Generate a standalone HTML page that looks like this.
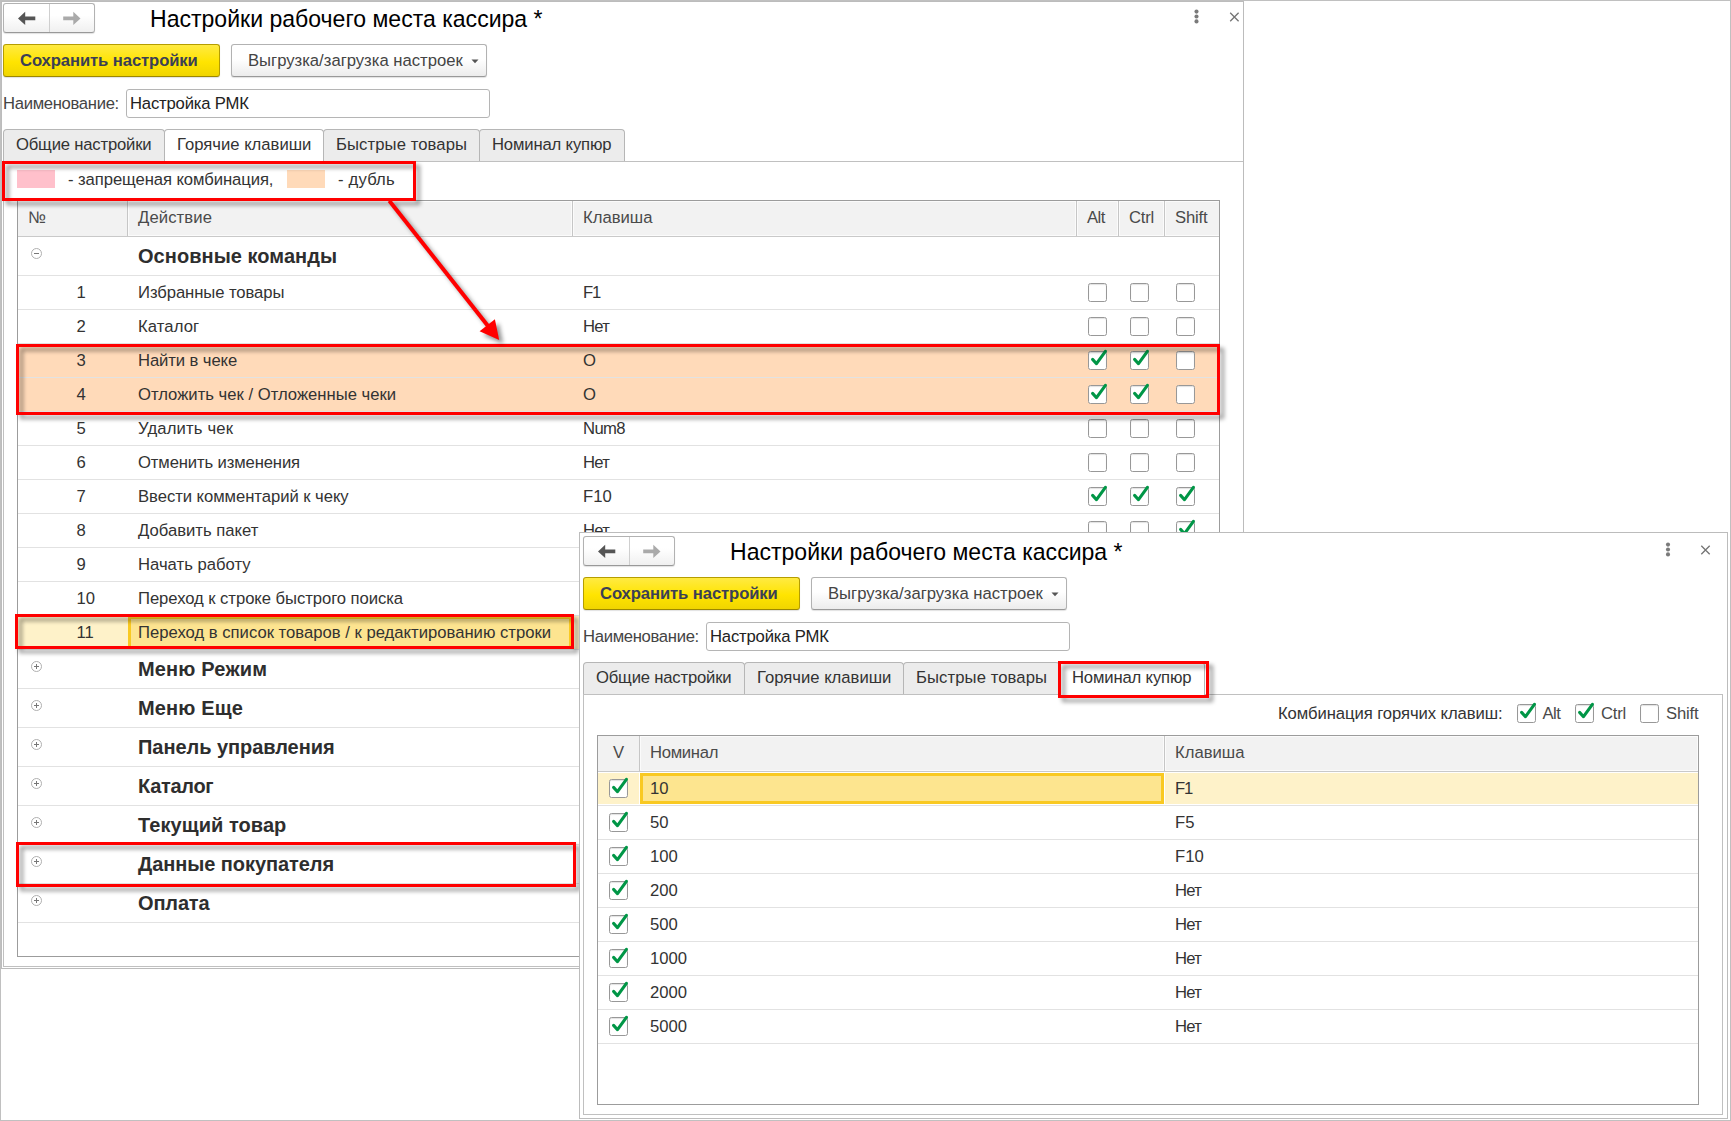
<!DOCTYPE html>
<html lang="ru"><head><meta charset="utf-8"><title>Настройки рабочего места кассира</title>
<style>
*{box-sizing:border-box;margin:0;padding:0}
html,body{width:1731px;height:1121px;overflow:hidden;background:#fff}
body{font-family:"Liberation Sans",sans-serif;font-size:16.67px;color:#333;position:relative}
.a{position:absolute}
.t{position:absolute;white-space:nowrap;line-height:20px;height:20px}
.win{position:absolute;background:#fff;overflow:hidden}
.title{position:absolute;font-size:23.06px;color:#000;white-space:nowrap;line-height:28px}
.nav{position:absolute;width:92px;height:30px;border:1px solid #b2b2b2;border-bottom-color:#999;border-radius:3px;background:linear-gradient(#fff,#fff 40%,#f0f0f0);box-shadow:0 1px 1px rgba(0,0,0,.12)}
.nav i{position:absolute;left:45px;top:0;width:1px;height:28px;background:#cfcfcf}
.ybtn{position:absolute;height:33px;border:1px solid #b59d00;border-bottom-color:#9c8700;border-radius:3px;background:linear-gradient(#ffea42,#ffe400 55%,#f0d500);box-shadow:0 1px 1px rgba(0,0,0,.12);font-weight:bold;color:#3b3f55;line-height:31px;white-space:nowrap;padding-left:16px}
.btn{position:absolute;height:33px;border:1px solid #b2b2b2;border-bottom-color:#999;border-radius:3px;background:linear-gradient(#fff,#fff 45%,#ececec);box-shadow:0 1px 1px rgba(0,0,0,.12);color:#444;line-height:31px;white-space:nowrap;padding-left:16px}
.inp{position:absolute;height:29px;border:1px solid #b5b5b5;border-radius:3px;background:#fff;line-height:27px;padding-left:3px;white-space:nowrap;color:#222}
.tab{position:absolute;height:32px;border:1px solid #b6b6b6;border-bottom:none;border-radius:4px 4px 0 0;background:#ececec;line-height:29px;padding-left:12px;white-space:nowrap;color:#333}
.tab.on{background:#fff;height:33px}
.panel{position:absolute;border:1px solid #c0c0c0;background:#fff}
.tbl{position:absolute;border:1px solid #9c9c9c;background:#fff;overflow:hidden}
.hd{position:absolute;left:0;top:0;right:0;height:36px;background:#f2f2f2;border-bottom:1px solid #c9c9c9}
.hc{position:absolute;top:0;height:35px;line-height:33px;color:#4a4a4a;white-space:nowrap;padding-left:10px;border-left:1px solid #c6c6c6;box-shadow:inset 1px 1px 0 #fbfbfb,inset -1px -1px 0 #fbfbfb}
.row{position:absolute;left:0;right:0;border-bottom:1px solid #e2e2e2}
.row .c{position:absolute;top:0;white-space:nowrap}
.r34{height:34px;line-height:33px}
.r39{height:39px;line-height:38px}
.g{font-weight:bold;font-size:20px;color:#2e2e2e}
.cb{position:absolute;width:19px;height:19px;border:1px solid #989898;border-radius:2.5px;background:#fff;box-shadow:inset 0 1px 1px rgba(0,0,0,.12)}
.cb svg{position:absolute;left:-1px;top:-3px;overflow:visible}
.tr{position:absolute;width:11px;height:11px;border:1px solid #b0b0b0;border-radius:50%;background:#fff}
.tr:before{content:"";position:absolute;left:2px;top:4px;width:5px;height:1px;background:#777}
.tr.p:after{content:"";position:absolute;left:4px;top:2px;width:1px;height:5px;background:#777}
.red{position:absolute;border:3px solid #ff0000;filter:drop-shadow(4px 4px 2.2px rgba(0,0,0,.42))}
</style></head>
<body>
<div class="a" style="left:0;top:0;width:1731px;height:1121px;border:1px solid #c0c0c0"></div>
<div class="a" style="left:1px;top:1px;width:1243px;height:968px;border:1px solid #bcbcbc;background:#fff"></div>
<div class="panel" style="left:3px;top:161px;width:1240px;height:806px;border-right:none"></div>
<div class="nav" style="left:3px;top:3px"><i></i></div>
<svg class="a" style="left:18px;top:11px" width="18" height="15" viewBox="0 0 18 15"><path transform="translate(0,0.4)" d="M0 7 L7.2 0.3 L7.2 5.2 L17.3 5.2 L17.3 8.8 L7.2 8.8 L7.2 13.7 Z" fill="#555"/></svg>
<svg class="a" style="left:63px;top:11px" width="18" height="15" viewBox="0 0 18 15"><path transform="translate(0,0.4)" d="M17.5 7 L10.3 0.3 L10.3 5.2 L0.2 5.2 L0.2 8.8 L10.3 8.8 L10.3 13.7 Z" fill="#aaa"/></svg>
<div class="title" style="left:150px;top:5px">Настройки рабочего места кассира *</div>
<svg class="a" style="left:1186px;top:5px" width="60" height="24" viewBox="0 0 60 24"><circle cx="10.5" cy="6.6" r="2.05" fill="#7a7a7a"/><circle cx="10.5" cy="11.5" r="2.05" fill="#7a7a7a"/><circle cx="10.5" cy="16.4" r="2.05" fill="#7a7a7a"/><path d="M44.2 7.8 L52.6 16.2 M52.6 7.8 L44.2 16.2" stroke="#747474" stroke-width="1.3" fill="none"/></svg>
<div class="ybtn" style="left:3px;top:44px;width:217px"><span style="letter-spacing:-0.105px">Сохранить настройки</span></div>
<div class="btn" style="left:231px;top:44px;width:256px">Выгрузка/загрузка настроек</div>
<svg class="a" style="left:471px;top:59px" width="8" height="5" viewBox="0 0 8 5"><path d="M0.5 0.5 L7.5 0.5 L4 4.2 Z" fill="#555"/></svg>
<div class="t" style="left:3px;top:94px;color:#444"><span style="letter-spacing:-0.32px">Наименование:</span></div>
<div class="inp" style="left:126px;top:89px;width:364px"><span style="letter-spacing:-0.18px">Настройка РМК</span></div>
<div class="tab" style="left:3px;top:129px;width:162px"><span style="letter-spacing:-0.19px">Общие настройки</span></div>
<div class="tab on" style="left:164px;top:129px;width:160px">Горячие клавиши</div>
<div class="tab" style="left:323px;top:129px;width:157px"><span style="letter-spacing:0.09px">Быстрые товары</span></div>
<div class="tab" style="left:479px;top:129px;width:146px"><span style="letter-spacing:-0.16px">Номинал купюр</span></div>
<div class="a" style="left:17px;top:170px;width:38px;height:18px;background:#ffc0cb"></div>
<div class="t" style="left:68px;top:170px"><span style="letter-spacing:-0.08px">- запрещеная комбинация,</span></div>
<div class="a" style="left:287px;top:170px;width:38px;height:18px;background:#ffdab9"></div>
<div class="t" style="left:338px;top:170px"><span style="letter-spacing:0.18px">- дубль</span></div>
<div class="tbl" style="left:17px;top:200px;width:1203px;height:757px">
<div class="hd"></div>
<div class="hc" style="left:0px;width:109px;border-left:none;box-shadow:none">№</div>
<div class="hc" style="left:109px;width:445px"><span style="letter-spacing:0.1px">Действие</span></div>
<div class="hc" style="left:554px;width:504px">Клавиша</div>
<div class="hc" style="left:1058px;width:42px"><span style="letter-spacing:-0.5px">Alt</span></div>
<div class="hc" style="left:1100px;width:46px"><span style="letter-spacing:-0.2px">Ctrl</span></div>
<div class="hc" style="left:1146px;width:56px"><span style="letter-spacing:-0.15px">Shift</span></div>
<div class="row r39" style="top:36px">
<div class="tr" style="left:13px;top:11px"></div>
<div class="c g" style="left:120px"><span style="letter-spacing:0.05px">Основные команды</span></div></div>
<div class="row r34" style="top:75px">
<div class="c" style="left:58.5px">1</div>
<div class="c" style="left:120px"><span style="letter-spacing:-0.08px">Избранные товары</span></div>
<div class="c" style="left:565px"><span style="letter-spacing:-1.2px">F1</span></div>
<div class="cb" style="left:1070px;top:7px"></div>
<div class="cb" style="left:1112px;top:7px"></div>
<div class="cb" style="left:1158px;top:7px"></div>
</div>
<div class="row r34" style="top:109px">
<div class="c" style="left:58.5px">2</div>
<div class="c" style="left:120px"><span style="letter-spacing:0.1px">Каталог</span></div>
<div class="c" style="left:565px"><span style="letter-spacing:-0.7px">Нет</span></div>
<div class="cb" style="left:1070px;top:7px"></div>
<div class="cb" style="left:1112px;top:7px"></div>
<div class="cb" style="left:1158px;top:7px"></div>
</div>
<div class="row r34" style="top:143px;background:#ffdab9">
<div class="c" style="left:58.5px">3</div>
<div class="c" style="left:120px"><span style="letter-spacing:-0.1px">Найти в чеке</span></div>
<div class="c" style="left:565px">O</div>
<div class="cb" style="left:1070px;top:7px"><svg width="22" height="22" viewBox="0 0 22 22"><path d="M4.6 10.4 L8.5 14.7 L17.4 2.3" fill="none" stroke="#009646" stroke-width="3.1" stroke-linecap="round" stroke-linejoin="round"/></svg></div>
<div class="cb" style="left:1112px;top:7px"><svg width="22" height="22" viewBox="0 0 22 22"><path d="M4.6 10.4 L8.5 14.7 L17.4 2.3" fill="none" stroke="#009646" stroke-width="3.1" stroke-linecap="round" stroke-linejoin="round"/></svg></div>
<div class="cb" style="left:1158px;top:7px"></div>
</div>
<div class="row r34" style="top:177px;background:#ffdab9">
<div class="c" style="left:58.5px">4</div>
<div class="c" style="left:120px">Отложить чек / Отложенные чеки</div>
<div class="c" style="left:565px">O</div>
<div class="cb" style="left:1070px;top:7px"><svg width="22" height="22" viewBox="0 0 22 22"><path d="M4.6 10.4 L8.5 14.7 L17.4 2.3" fill="none" stroke="#009646" stroke-width="3.1" stroke-linecap="round" stroke-linejoin="round"/></svg></div>
<div class="cb" style="left:1112px;top:7px"><svg width="22" height="22" viewBox="0 0 22 22"><path d="M4.6 10.4 L8.5 14.7 L17.4 2.3" fill="none" stroke="#009646" stroke-width="3.1" stroke-linecap="round" stroke-linejoin="round"/></svg></div>
<div class="cb" style="left:1158px;top:7px"></div>
</div>
<div class="row r34" style="top:211px">
<div class="c" style="left:58.5px">5</div>
<div class="c" style="left:120px"><span style="letter-spacing:0.15px">Удалить чек</span></div>
<div class="c" style="left:565px"><span style="letter-spacing:-0.6px">Num8</span></div>
<div class="cb" style="left:1070px;top:7px"></div>
<div class="cb" style="left:1112px;top:7px"></div>
<div class="cb" style="left:1158px;top:7px"></div>
</div>
<div class="row r34" style="top:245px">
<div class="c" style="left:58.5px">6</div>
<div class="c" style="left:120px"><span style="letter-spacing:-0.135px">Отменить изменения</span></div>
<div class="c" style="left:565px"><span style="letter-spacing:-0.7px">Нет</span></div>
<div class="cb" style="left:1070px;top:7px"></div>
<div class="cb" style="left:1112px;top:7px"></div>
<div class="cb" style="left:1158px;top:7px"></div>
</div>
<div class="row r34" style="top:279px">
<div class="c" style="left:58.5px">7</div>
<div class="c" style="left:120px"><span style="letter-spacing:-0.05px">Ввести комментарий к чеку</span></div>
<div class="c" style="left:565px">F10</div>
<div class="cb" style="left:1070px;top:7px"><svg width="22" height="22" viewBox="0 0 22 22"><path d="M4.6 10.4 L8.5 14.7 L17.4 2.3" fill="none" stroke="#009646" stroke-width="3.1" stroke-linecap="round" stroke-linejoin="round"/></svg></div>
<div class="cb" style="left:1112px;top:7px"><svg width="22" height="22" viewBox="0 0 22 22"><path d="M4.6 10.4 L8.5 14.7 L17.4 2.3" fill="none" stroke="#009646" stroke-width="3.1" stroke-linecap="round" stroke-linejoin="round"/></svg></div>
<div class="cb" style="left:1158px;top:7px"><svg width="22" height="22" viewBox="0 0 22 22"><path d="M4.6 10.4 L8.5 14.7 L17.4 2.3" fill="none" stroke="#009646" stroke-width="3.1" stroke-linecap="round" stroke-linejoin="round"/></svg></div>
</div>
<div class="row r34" style="top:313px">
<div class="c" style="left:58.5px">8</div>
<div class="c" style="left:120px">Добавить пакет</div>
<div class="c" style="left:565px"><span style="letter-spacing:-0.7px">Нет</span></div>
<div class="cb" style="left:1070px;top:7px"></div>
<div class="cb" style="left:1112px;top:7px"></div>
<div class="cb" style="left:1158px;top:7px"><svg width="22" height="22" viewBox="0 0 22 22"><path d="M4.6 10.4 L8.5 14.7 L17.4 2.3" fill="none" stroke="#009646" stroke-width="3.1" stroke-linecap="round" stroke-linejoin="round"/></svg></div>
</div>
<div class="row r34" style="top:347px">
<div class="c" style="left:58.5px">9</div>
<div class="c" style="left:120px">Начать работу</div>
</div>
<div class="row r34" style="top:381px">
<div class="c" style="left:58.5px">10</div>
<div class="c" style="left:120px"><span style="letter-spacing:-0.06px">Переход к строке быстрого поиска</span></div>
</div>
<div class="row r34" style="top:415px;background:#fef2c9">
<div class="a" style="left:110px;top:0;width:444px;height:33px;background:#fde490;border:3px solid #f9c922"></div>
<div class="c" style="left:58.5px">11</div>
<div class="c" style="left:120px">Переход в список товаров / к редактированию строки</div>
</div>
<div class="row r39" style="top:449px">
<div class="tr p" style="left:13px;top:11px"></div>
<div class="c g" style="left:120px"><span style="letter-spacing:0.17px">Меню Режим</span></div></div>
<div class="row r39" style="top:488px">
<div class="tr p" style="left:13px;top:11px"></div>
<div class="c g" style="left:120px"><span style="letter-spacing:0.16px">Меню Еще</span></div></div>
<div class="row r39" style="top:527px">
<div class="tr p" style="left:13px;top:11px"></div>
<div class="c g" style="left:120px"><span style="letter-spacing:-0.05px">Панель управления</span></div></div>
<div class="row r39" style="top:566px">
<div class="tr p" style="left:13px;top:11px"></div>
<div class="c g" style="left:120px"><span style="letter-spacing:-0.3px">Каталог</span></div></div>
<div class="row r39" style="top:605px">
<div class="tr p" style="left:13px;top:11px"></div>
<div class="c g" style="left:120px"><span style="letter-spacing:0.06px">Текущий товар</span></div></div>
<div class="row r39" style="top:644px">
<div class="tr p" style="left:13px;top:11px"></div>
<div class="c g" style="left:120px"><span style="letter-spacing:-0.07px">Данные покупателя</span></div></div>
<div class="row r39" style="top:683px">
<div class="tr p" style="left:13px;top:11px"></div>
<div class="c g" style="left:120px"><span style="letter-spacing:-0.15px">Оплата</span></div></div>
</div>
<div class="red" style="left:2px;top:161px;width:414px;height:39.75px"></div>
<div class="red" style="left:16px;top:344px;width:1204px;height:70.69999999999999px"></div>
<div class="red" style="left:15px;top:614px;width:559px;height:35px"></div>
<div class="red" style="left:16px;top:842.2px;width:560px;height:44.59999999999991px"></div>
<svg class="a" style="left:0;top:0;filter:drop-shadow(4px 4px 2.2px rgba(0,0,0,.42))" width="700" height="400" viewBox="0 0 700 400"><path d="M389.3 200.7 L488 326" stroke="#ff0000" stroke-width="4" fill="none"/><path d="M499.2 339.9 L479.6 331.3 L494.9 319.2 Z" fill="#ff0000"/></svg>
<div class="a" style="left:579px;top:532px;width:1149px;height:587px;border:1px solid #bcbcbc;background:#fff"></div>
<div class="panel" style="left:583px;top:694px;width:1140px;height:421px"></div>
<div class="nav" style="left:583px;top:536px"><i></i></div>
<svg class="a" style="left:598px;top:544px" width="18" height="15" viewBox="0 0 18 15"><path transform="translate(0,0.4)" d="M0 7 L7.2 0.3 L7.2 5.2 L17.3 5.2 L17.3 8.8 L7.2 8.8 L7.2 13.7 Z" fill="#555"/></svg>
<svg class="a" style="left:643px;top:544px" width="18" height="15" viewBox="0 0 18 15"><path transform="translate(0,0.4)" d="M17.5 7 L10.3 0.3 L10.3 5.2 L0.2 5.2 L0.2 8.8 L10.3 8.8 L10.3 13.7 Z" fill="#aaa"/></svg>
<div class="title" style="left:730px;top:538px">Настройки рабочего места кассира *</div>
<svg class="a" style="left:1658px;top:538px" width="60" height="24" viewBox="0 0 60 24"><circle cx="10.0" cy="6.6" r="2.05" fill="#7a7a7a"/><circle cx="10.0" cy="11.5" r="2.05" fill="#7a7a7a"/><circle cx="10.0" cy="16.4" r="2.05" fill="#7a7a7a"/><path d="M43.3 7.8 L51.7 16.2 M51.7 7.8 L43.3 16.2" stroke="#747474" stroke-width="1.3" fill="none"/></svg>
<div class="ybtn" style="left:583px;top:577px;width:217px"><span style="letter-spacing:-0.105px">Сохранить настройки</span></div>
<div class="btn" style="left:811px;top:577px;width:256px">Выгрузка/загрузка настроек</div>
<svg class="a" style="left:1051px;top:592px" width="8" height="5" viewBox="0 0 8 5"><path d="M0.5 0.5 L7.5 0.5 L4 4.2 Z" fill="#555"/></svg>
<div class="t" style="left:583px;top:627px;color:#444"><span style="letter-spacing:-0.32px">Наименование:</span></div>
<div class="inp" style="left:706px;top:622px;width:364px"><span style="letter-spacing:-0.18px">Настройка РМК</span></div>
<div class="tab" style="left:583px;top:662px;width:162px"><span style="letter-spacing:-0.19px">Общие настройки</span></div>
<div class="tab" style="left:744px;top:662px;width:160px">Горячие клавиши</div>
<div class="tab" style="left:903px;top:662px;width:157px"><span style="letter-spacing:0.09px">Быстрые товары</span></div>
<div class="tab on" style="left:1059px;top:662px;width:146px"><span style="letter-spacing:-0.16px">Номинал купюр</span></div>
<div class="t" style="left:1278px;top:704px"><span style="letter-spacing:-0.08px">Комбинация горячих клавиш:</span></div>
<div class="cb" style="left:1517px;top:704px"><svg width="22" height="22" viewBox="0 0 22 22"><path d="M4.6 10.4 L8.5 14.7 L17.4 2.3" fill="none" stroke="#009646" stroke-width="3.1" stroke-linecap="round" stroke-linejoin="round"/></svg></div>
<div class="t" style="left:1542.5px;top:704px;color:#4a4a4a"><span style="letter-spacing:-0.5px">Alt</span></div>
<div class="cb" style="left:1575px;top:704px"><svg width="22" height="22" viewBox="0 0 22 22"><path d="M4.6 10.4 L8.5 14.7 L17.4 2.3" fill="none" stroke="#009646" stroke-width="3.1" stroke-linecap="round" stroke-linejoin="round"/></svg></div>
<div class="t" style="left:1601px;top:704px;color:#4a4a4a"><span style="letter-spacing:-0.2px">Ctrl</span></div>
<div class="cb" style="left:1640px;top:704px"></div>
<div class="t" style="left:1666px;top:704px;color:#4a4a4a"><span style="letter-spacing:-0.15px">Shift</span></div>
<div class="tbl" style="left:597px;top:735px;width:1102px;height:370px">
<div class="hd"></div>
<div class="hc" style="left:0;width:41px;border-left:none;box-shadow:none;padding-left:0;text-align:center">V</div>
<div class="hc" style="left:41px;width:525px"><span style="letter-spacing:-0.3px">Номинал</span></div>
<div class="hc" style="left:566px;width:534px">Клавиша</div>
<div class="row r34" style="top:36px">
<div class="a" style="left:0;top:1px;width:41px;height:31px;background:#fef2c9"></div>
<div class="a" style="left:42px;top:1px;width:524px;height:31px;background:#fde58f;border:3px solid #f9c922"></div>
<div class="a" style="left:567px;top:1px;right:0;height:31px;background:#fef2c9"></div>
<div class="cb" style="left:11px;top:7px"><svg width="22" height="22" viewBox="0 0 22 22"><path d="M4.6 10.4 L8.5 14.7 L17.4 2.3" fill="none" stroke="#009646" stroke-width="3.1" stroke-linecap="round" stroke-linejoin="round"/></svg></div>
<div class="c" style="left:52px">10</div>
<div class="c" style="left:577px"><span style="letter-spacing:-1.2px">F1</span></div>
</div>
<div class="row r34" style="top:70px">
<div class="cb" style="left:11px;top:7px"><svg width="22" height="22" viewBox="0 0 22 22"><path d="M4.6 10.4 L8.5 14.7 L17.4 2.3" fill="none" stroke="#009646" stroke-width="3.1" stroke-linecap="round" stroke-linejoin="round"/></svg></div>
<div class="c" style="left:52px">50</div>
<div class="c" style="left:577px">F5</div>
</div>
<div class="row r34" style="top:104px">
<div class="cb" style="left:11px;top:7px"><svg width="22" height="22" viewBox="0 0 22 22"><path d="M4.6 10.4 L8.5 14.7 L17.4 2.3" fill="none" stroke="#009646" stroke-width="3.1" stroke-linecap="round" stroke-linejoin="round"/></svg></div>
<div class="c" style="left:52px">100</div>
<div class="c" style="left:577px">F10</div>
</div>
<div class="row r34" style="top:138px">
<div class="cb" style="left:11px;top:7px"><svg width="22" height="22" viewBox="0 0 22 22"><path d="M4.6 10.4 L8.5 14.7 L17.4 2.3" fill="none" stroke="#009646" stroke-width="3.1" stroke-linecap="round" stroke-linejoin="round"/></svg></div>
<div class="c" style="left:52px">200</div>
<div class="c" style="left:577px"><span style="letter-spacing:-0.7px">Нет</span></div>
</div>
<div class="row r34" style="top:172px">
<div class="cb" style="left:11px;top:7px"><svg width="22" height="22" viewBox="0 0 22 22"><path d="M4.6 10.4 L8.5 14.7 L17.4 2.3" fill="none" stroke="#009646" stroke-width="3.1" stroke-linecap="round" stroke-linejoin="round"/></svg></div>
<div class="c" style="left:52px">500</div>
<div class="c" style="left:577px"><span style="letter-spacing:-0.7px">Нет</span></div>
</div>
<div class="row r34" style="top:206px">
<div class="cb" style="left:11px;top:7px"><svg width="22" height="22" viewBox="0 0 22 22"><path d="M4.6 10.4 L8.5 14.7 L17.4 2.3" fill="none" stroke="#009646" stroke-width="3.1" stroke-linecap="round" stroke-linejoin="round"/></svg></div>
<div class="c" style="left:52px">1000</div>
<div class="c" style="left:577px"><span style="letter-spacing:-0.7px">Нет</span></div>
</div>
<div class="row r34" style="top:240px">
<div class="cb" style="left:11px;top:7px"><svg width="22" height="22" viewBox="0 0 22 22"><path d="M4.6 10.4 L8.5 14.7 L17.4 2.3" fill="none" stroke="#009646" stroke-width="3.1" stroke-linecap="round" stroke-linejoin="round"/></svg></div>
<div class="c" style="left:52px">2000</div>
<div class="c" style="left:577px"><span style="letter-spacing:-0.7px">Нет</span></div>
</div>
<div class="row r34" style="top:274px">
<div class="cb" style="left:11px;top:7px"><svg width="22" height="22" viewBox="0 0 22 22"><path d="M4.6 10.4 L8.5 14.7 L17.4 2.3" fill="none" stroke="#009646" stroke-width="3.1" stroke-linecap="round" stroke-linejoin="round"/></svg></div>
<div class="c" style="left:52px">5000</div>
<div class="c" style="left:577px"><span style="letter-spacing:-0.7px">Нет</span></div>
</div>
</div>
<div class="red" style="left:1058px;top:661px;width:151px;height:37px"></div>
</body></html>
